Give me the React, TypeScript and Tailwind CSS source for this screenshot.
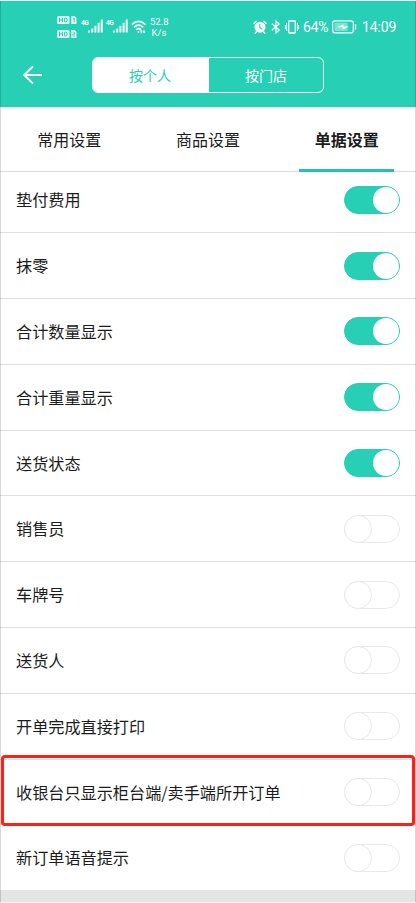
import { useState } from "react";
import clsx from "clsx";

interface Setting {
  id: string;
  label: string;
  enabled: boolean;
  highlighted?: boolean;
}

const SETTINGS: Setting[] = [
  { id: "advance", label: "垫付费用", enabled: true },
  { id: "round", label: "抹零", enabled: true },
  { id: "totalQty", label: "合计数量显示", enabled: true },
  { id: "totalWeight", label: "合计重量显示", enabled: true },
  { id: "delivery", label: "送货状态", enabled: true },
  { id: "seller", label: "销售员", enabled: false },
  { id: "plate", label: "车牌号", enabled: false },
  { id: "courier", label: "送货人", enabled: false },
  { id: "print", label: "开单完成直接打印", enabled: false },
  { id: "cashier", label: "收银台只显示柜台端/卖手端所开订单", enabled: false, highlighted: true },
  { id: "voice", label: "新订单语音提示", enabled: false },
];

const TABS = ["常用设置", "商品设置", "单据设置"];
const SCOPES = ["按个人", "按门店"];

function HdBadge({ sim }: { sim: number }) {
  return (
    <svg width="20" height="8" viewBox="0 0 20 8">
      <rect width="12.5" height="8" rx="1.5" fill="#fff" fillOpacity="0.85" />
      <path d="M2.5 1.8v4.4M5.5 1.8v4.4M2.5 4h3M7.6 2.2v3.6h1.1q1.5 0 1.5-1.8T8.7 2.2z" stroke="#27cfb5" fill="none" />
      <path d="M14.3 0h3.2L19.5 2v6h-5.2z" fill="#fff" fillOpacity="0.9" />
      {sim === 1 ? (
        <path d="M16.2 2.8l.9-.5v4" stroke="#27cfb5" fill="none" />
      ) : (
        <path d="M15.6 2.2h2v1.9h-1.7v1.9h2.1" stroke="#27cfb5" strokeWidth="0.8" fill="none" />
      )}
    </svg>
  );
}

function Signal() {
  return (
    <div className="flex">
      <span className="mt-px w-[7px] text-[6.5px] leading-[7px] font-bold tracking-[-0.5px]">4G</span>
      <svg width="15" height="14" viewBox="0 0 15 14" fill="#fff" fillOpacity="0.95">
        <rect x="0" y="11.5" width="2" height="2" />
        <rect x="3.2" y="9.5" width="2" height="4" />
        <rect x="6.4" y="6.8" width="2" height="6.7" />
        <rect x="9.6" y="3.8" width="2" height="9.7" />
        <rect x="12.7" y="0.5" width="2" height="13" />
      </svg>
    </div>
  );
}

function WifiIcon() {
  return (
    <svg width="16" height="14" viewBox="0 0 16 14" fill="none" stroke="#fff" strokeWidth="1.6">
      <path d="M.8 4.6q6.8-6.4 13.6 0M3 7.3q4.6-4.2 9.2 0M5.2 9.8q2.4-2.2 4.8 0" />
      <circle cx="7.5" cy="12" r="1" fill="#fff" stroke="none" />
      <path d="M10.3 10.6v2.6M13 10v2.6" strokeWidth="1" />
      <path d="M9 11.8l1.3-1.8 1.3 1.8zM11.7 11.4L13 13.2l1.3-1.8z" fill="#fff" stroke="none" />
    </svg>
  );
}

function AlarmIcon() {
  return (
    <svg width="14" height="14" viewBox="0 0 14 14" fill="none" stroke="#fff" strokeLinecap="round">
      <circle cx="7" cy="7.2" r="5.5" fill="#fff" stroke="none" />
      <path d="M.9 3.4L3.2 1.2M13.1 3.4l-2.3-2.2M3.2 12l-1 1.2M10.8 12l1 1.2" strokeWidth="1.4" />
      <path d="M6.8 4.4v3.1l2.2 1.6" stroke="#27cfb5" strokeWidth="1.1" />
    </svg>
  );
}

function BluetoothIcon() {
  return (
    <svg width="10" height="14" viewBox="0 0 10 14" fill="none" stroke="#fff" strokeWidth="1.2">
      <path d="M.8 3.8l7.4 6.2L5 13V1l3.2 3L.8 10.2" />
    </svg>
  );
}

function VibrateIcon() {
  return (
    <svg width="16" height="14" viewBox="0 0 16 14" fill="none" stroke="#fff" strokeWidth="1.3">
      <rect x="4.7" y="1" width="6.6" height="12" rx="0.8" />
      <path d="M2.6 3v2l-1.2 1 1.2 1-1.2 1 1.2 1v2M13.4 3v2l1.2 1-1.2 1 1.2 1-1.2 1v2" strokeWidth="1.1" />
    </svg>
  );
}

function BatteryIcon() {
  return (
    <svg width="25" height="14" viewBox="0 0 25 14" fill="none">
      <rect x="0.7" y="0.9" width="20.6" height="12" rx="2.2" stroke="#fff" strokeWidth="1.2" />
      <rect x="2.6" y="2.8" width="13" height="8.2" rx="0.8" fill="#fff" fillOpacity="0.4" />
      <path d="M5 7.2l6.4-3v2.2h5.6L10.6 9.6V7.2z" fill="#fff" />
      <path d="M23.5 4.2v5.4" stroke="#fff" strokeWidth="1.3" />
    </svg>
  );
}

function StatusBar() {
  return (
    <div className="flex h-[51px] items-start pl-[57px] font-['Roboto',sans-serif] text-white">
      <div className="mt-[15px] flex flex-col gap-1.5">
        <HdBadge sim={1} />
        <HdBadge sim={2} />
      </div>
      <div className="mt-[18px] ml-1 flex gap-[3px]">
        <Signal />
        <Signal />
      </div>
      <div className="mt-[19px] ml-[3px]">
        <WifiIcon />
      </div>
      <div className="mt-[15px] ml-[3px] w-[18px] text-center text-[9.5px] leading-[11px]">
        <div>52.8</div>
        <div>K/s</div>
      </div>
      <div className="mt-[19px] ml-[85px] flex items-center">
        <AlarmIcon />
        <div className="ml-[4px]"><BluetoothIcon /></div>
        <div className="ml-[3px]"><VibrateIcon /></div>
        <span className="ml-[3px] w-[27px] text-[14px] leading-[14px] tracking-[-0.2px] whitespace-nowrap">64%</span>
        <div className="ml-[2px]"><BatteryIcon /></div>
        <span className="ml-[5px] text-[14px] leading-[14px] tracking-[-0.1px]">14:09</span>
      </div>
    </div>
  );
}

interface SwitchProps {
  checked: boolean;
  onChange: () => void;
}

function Switch({ checked, onChange }: SwitchProps) {
  return (
    <button
      role="switch"
      aria-checked={checked}
      onClick={onChange}
      className={clsx(
        "flex h-7 w-14 shrink-0 rounded-full border",
        checked ? "justify-end border-[#27cfb5] bg-[#27cfb5]" : "justify-start border-[#e9e9e9] bg-white"
      )}
    >
      <span
        className={clsx(
          "rounded-full bg-white",
          checked ? "size-[26px]" : "-mt-px -ml-px size-7 border border-[#e9e9e9]"
        )}
      />
    </button>
  );
}

export default function App() {
  const [scope, setScope] = useState(0);
  const [tab, setTab] = useState(2);
  const [settings, setSettings] = useState(SETTINGS);

  const toggle = (id: string) => {
    setSettings((prev) => prev.map((s) => (s.id === id ? { ...s, enabled: !s.enabled } : s)));
  };

  return (
    <div className="relative flex h-[903px] w-[416px] flex-col overflow-hidden border-y border-[#f4f4f4] bg-white font-['Noto_Sans_CJK_SC',sans-serif] text-[#1c1c1c]">
      <header className="h-[106px] shrink-0 bg-[#27cfb5]">
        <StatusBar />
        <div className="flex pt-[5px] pl-[22px]">
          <button className="mt-[8px] h-5 w-5">
            <svg width="20" height="20" viewBox="0 0 20 20" fill="none" stroke="#fff" strokeWidth="2">
              <path d="M20 10H2.2M11 1.4L2.2 10l8.8 8.6" />
            </svg>
          </button>
          <div className="ml-[50px] flex h-[36px] w-[232px] overflow-hidden rounded-md border border-white">
            {SCOPES.map((name, i) => (
              <button
                key={name}
                onClick={() => setScope(i)}
                className={clsx(
                  "text-[14px] leading-[34px] first:w-[116px] first:pr-0.5 last:flex-1",
                  scope === i ? "bg-white text-[#27cfb5]" : "text-white"
                )}
              >
                {name}
              </button>
            ))}
          </div>
        </div>
      </header>

      <nav className="z-10 grid h-[65px] shrink-0 grid-cols-3 border-b border-[#dcdcdc] bg-white">
        {TABS.map((name, i) => (
          <button
            key={name}
            onClick={() => setTab(i)}
            className={clsx("flex h-[65px] flex-col items-center text-[16px]", tab === i && "font-bold")}
          >
            <span className="h-[62px] shrink-0 leading-[64px]">{name}</span>
            {tab === i && <span className="h-[3px] w-[95px] shrink-0 bg-[#1fc5ad]" />}
          </button>
        ))}
      </nav>

      {/* list is scrolled a few pixels under the tabs */}
      <ul className="-mt-[4.5px] shrink-0">
        {settings.map((s) => (
          <li
            key={s.id}
            className="relative flex h-[65.8px] items-center justify-between border-b border-[#dfdfdf] px-4 last:h-[65px] last:border-b-0"
          >
            <span className="pb-px text-[16.15px] leading-6">{s.label}</span>
            <Switch checked={s.enabled} onChange={() => toggle(s.id)} />
            {s.highlighted && (
              <div className="pointer-events-none absolute -top-[4.5px] right-px left-px h-[71px] rounded-[4px] border-3 border-[#ff1f14]" />
            )}
          </li>
        ))}
      </ul>
      <div className="flex-1 bg-[#e5e5e5]" />

      <div className="pointer-events-none absolute inset-0 z-20 border-x border-black/15" />
    </div>
  );
}
